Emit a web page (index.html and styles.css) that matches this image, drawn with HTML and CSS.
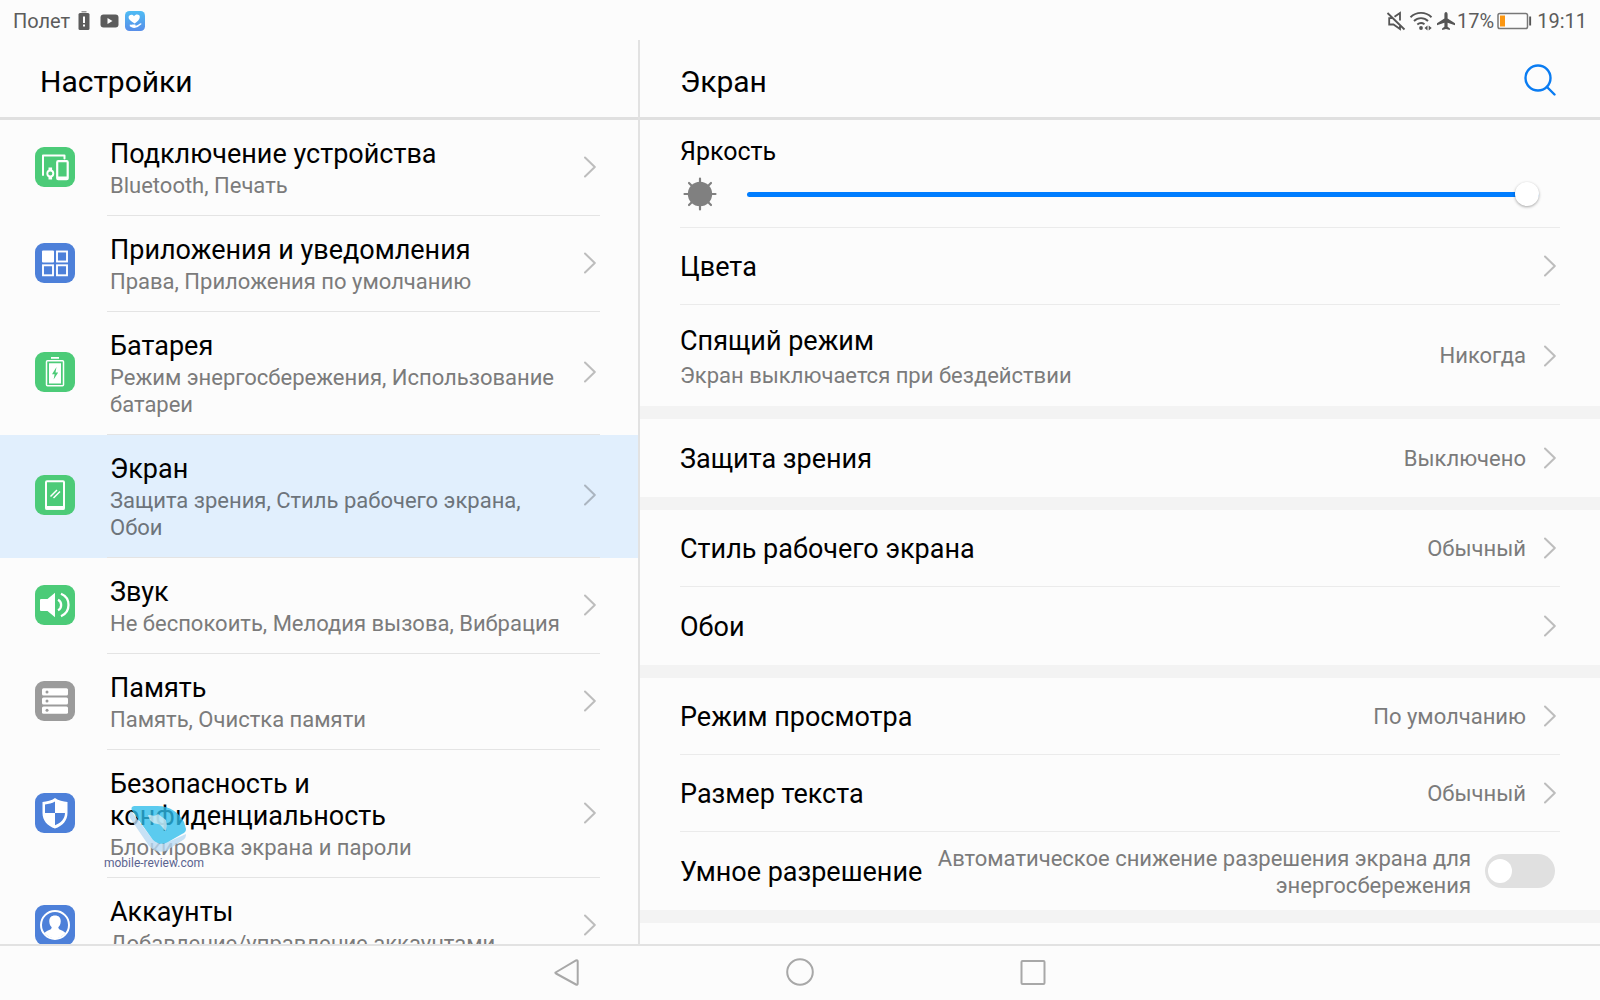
FILE: index.html
```html
<!DOCTYPE html>
<html lang="ru">
<head>
<meta charset="utf-8">
<meta name="viewport" content="width=device-width, initial-scale=1">
<title>Настройки</title>
<link rel="stylesheet" href="styles.css">
</head>
<body>
<svg class="defs" aria-hidden="true">
  <symbol id="chevron" viewBox="0 0 12 22"><path d="M1 1.500 10.800 11 1 20.500" fill="none" stroke="currentColor" stroke-width="2" stroke-linecap="round" stroke-linejoin="round"/></symbol>
</svg>
<div class="screen">
  <div class="statusbar">
    <div class="status-left">
      <span>Полет</span>
      <svg class="st-alert" width="12" height="20" viewBox="0 0 12 20"><path d="M3.500 0h5v1.500h-5z" fill="#999"/><rect x="0.500" y="2" width="11" height="17" rx="1.500" fill="#5c5c5c"/><path d="M5 5.500h2v6.500H5zM5 13.500h2v2H5z" fill="#fff"/></svg>
      <svg class="st-video" width="19" height="14" viewBox="0 0 19 14"><rect x="0.500" y="0.500" width="18" height="13" rx="3" fill="#5c5c5c"/><path d="M7.500 4v6l5-3z" fill="#fff"/></svg>
      <svg width="20" height="20" viewBox="0 0 20 20"><defs><linearGradient id="care" x1="0" y1="0" x2="0" y2="1"><stop offset="0" stop-color="#4fbcf4"/><stop offset="1" stop-color="#588ee9"/></linearGradient></defs><rect width="20" height="20" rx="4.500" fill="url(#care)"/><path d="M9.700 12.500C6.500 10.500 3.600 8.600 3.600 6.200c0-2.500 3.700-3.600 5.400-1 1.600-2.400 5.800-2 5.800.7 0 2.300-2.400 4.600-5.100 6.600z" fill="#fff"/><path d="M4.800 13.500c2 .5 3.500-.2 5 .1 1.400.2 1 1.200 0 1.400 2.500-.2 4.500-2.600 6-2.800.9 0 .9.800.2 1.400-2.200 2-4.300 3.300-6.700 3.300-2 0-3.400-1.400-4.500-1.700z" fill="#fff"/></svg>
    </div>
    <div class="status-right">
      <svg width="20" height="20" viewBox="0 0 20 20" fill="none" stroke="#555" stroke-width="1.800"><path d="M1.500 2 18.500 18.500M8.500 5.800 14 2v7.500M6 7.200H3.200v6.300h4.300L14 18v-3"/></svg>
      <svg width="24" height="20" viewBox="0 0 24 20" fill="none" stroke="#555" stroke-width="1.900"><path d="M1.500 6.200a15 15 0 0 1 21 0M5 10a10 10 0 0 1 14 0M8.300 13.500a6 6 0 0 1 7.200-.3"/><circle cx="12" cy="17" r="1.900" fill="#555" stroke="none"/><path d="M15.500 17l3-2.500v5zM22.700 17l-3-2.500v5z" fill="#555" stroke="none"/></svg>
      <svg width="20" height="20" viewBox="0 0 20 20"><path d="M10 1c1 0 1.600 1 1.600 2.300v4.200l7.400 4.700v2l-7.400-2.400v4l2.300 1.700V19L10 18l-3.900 1v-1.500l2.300-1.700v-4L1 14.200v-2l7.400-4.700V3.300C8.400 2 9 1 10 1z" fill="#555"/></svg>
      <span>17%</span>
      <svg class="st-battery" width="35" height="18" viewBox="0 0 35 18"><rect x="1" y="1.500" width="29.500" height="15" rx="1.800" fill="none" stroke="#777" stroke-width="1.500"/><path d="M3 3.500h5v11H3z" fill="#fb9611"/><path d="M32.200 4.500h1.900v9h-1.900z" fill="#555"/></svg>
      <span>19:11</span>
    </div>
  </div>

  <main class="panes">
    <section class="pane pane-menu">
      <header class="pane-header"><h1>Настройки</h1></header>
      <nav class="menu">
        <a class="item" href="#devices">
          <svg class="app green" width="40" height="40" viewBox="0 0 40 40"><path d="M8 28V8.500h21.500v3" fill="none" stroke="#fff" stroke-width="2" stroke-linejoin="round" stroke-linecap="round"/><rect x="22.200" y="14.200" width="10.500" height="18" rx="1" fill="none" stroke="#fff" stroke-width="2.200"/><path d="M22 29.500h11v3H22zM13.500 20.500h3.600v3h-3.600zM13.500 29.500h3.600v3h-3.600z" fill="#fff"/><circle cx="15.300" cy="26.500" r="3" fill="none" stroke="#fff" stroke-width="1.900"/></svg>
          <span class="item-main"><span class="item-text"><span class="title">Подключение устройства</span><span class="sub">Bluetooth, Печать</span></span><svg class="chev"><use href="#chevron"/></svg></span>
        </a>
        <a class="item" href="#apps">
          <svg class="app blue" width="40" height="40" viewBox="0 0 40 40"><rect x="7" y="7.500" width="12" height="12" rx="1" fill="#fff"/><g fill="none" stroke="#fff" stroke-width="1.900"><rect x="22" y="8.500" width="10" height="10"/><rect x="8" y="22.300" width="10" height="10"/><rect x="22" y="22.300" width="10" height="10"/></g></svg>
          <span class="item-main"><span class="item-text"><span class="title">Приложения и уведомления</span><span class="sub">Права, Приложения по умолчанию</span></span><svg class="chev"><use href="#chevron"/></svg></span>
        </a>
        <a class="item" href="#battery">
          <svg class="app green" width="40" height="40" viewBox="0 0 40 40"><path d="M16 5h8v1.800h-8z" fill="#fff"/><rect x="11.500" y="8.800" width="17" height="25" rx="1" fill="none" stroke="#fff" stroke-width="1.500"/><path d="M14 11.200h12v20.300H14z" fill="#fff"/><path d="M21.500 15 17 22.200h2.600l-1 5.300 4.600-7h-2.700z" fill="#4ccb78"/></svg>
          <span class="item-main"><span class="item-text"><span class="title">Батарея</span><span class="sub">Режим энергосбережения, Использование батареи</span></span><svg class="chev"><use href="#chevron"/></svg></span>
        </a>
        <a class="item selected" href="#display" aria-current="page">
          <svg class="app green" width="40" height="40" viewBox="0 0 40 40"><rect x="11" y="6.300" width="18" height="27.500" rx="1" fill="none" stroke="#fff" stroke-width="2"/><path d="M10.500 31h19v3.800h-19z" fill="#fff"/><path d="M15.500 21.500l6.500-6.500M18.500 23l6.500-6.500" stroke="#fff" stroke-width="1.500"/></svg>
          <span class="item-main"><span class="item-text"><span class="title">Экран</span><span class="sub">Защита зрения, Стиль рабочего экрана, Обои</span></span><svg class="chev"><use href="#chevron"/></svg></span>
        </a>
        <a class="item" href="#sound">
          <svg class="app green" width="40" height="40" viewBox="0 0 40 40"><path d="M6 14h6.500l7.500-6.300v24.500L12.500 26H6a1 1 0 0 1-1-1V15a1 1 0 0 1 1-1z" fill="#fff"/><path d="M23 14.800c4.200 2 4.200 8.400 0 10.400M26 8.800c10 4.200 10 18.200 0 22.400" fill="none" stroke="#fff" stroke-width="2.300"/></svg>
          <span class="item-main"><span class="item-text"><span class="title">Звук</span><span class="sub">Не беспокоить, Мелодия вызова, Вибрация</span></span><svg class="chev"><use href="#chevron"/></svg></span>
        </a>
        <a class="item" href="#storage">
          <svg class="app gray" width="40" height="40" viewBox="0 0 40 40"><g fill="#fff"><rect x="7" y="7.300" width="26" height="7.300" rx="1.500"/><rect x="7" y="16.500" width="26" height="7" rx="1.500"/><rect x="7" y="25.500" width="26" height="7.300" rx="1.500"/></g><g fill="#9b9b9b"><circle cx="12" cy="11" r="1.500"/><circle cx="12" cy="20" r="1.500"/><circle cx="12" cy="29.200" r="1.500"/></g></svg>
          <span class="item-main"><span class="item-text"><span class="title">Память</span><span class="sub">Память, Очистка памяти</span></span><svg class="chev"><use href="#chevron"/></svg></span>
        </a>
        <a class="item" href="#security">
          <svg class="app blue" width="40" height="40" viewBox="0 0 40 40"><path d="M20 5c3.500 2.800 8 3.500 12.500 4v11c0 7.500-5 13-12.500 15.500C12.500 33 7.500 27.500 7.500 20V9C12 8.500 16.500 7.800 20 5z" fill="#fff"/><path d="M20 8.500V20H10v-8.500c3.600-.4 7-1.200 10-3zM20 20h10c0 5.800-4.200 10-10 12.200z" fill="#4d80d9"/></svg>
          <span class="item-main"><span class="item-text"><span class="title">Безопасность и конфиденциальность</span><span class="sub">Блокировка экрана и пароли</span></span><svg class="chev"><use href="#chevron"/></svg></span>
          <span class="watermark">
            <svg width="62" height="48" viewBox="0 0 62 48"><path d="M3 5C1 8 1 10 2 12L19 37c5 8 12 10 19 8l17-11c2-1 3-3 3-6L40 36c-6 3-12 1-15-2z" fill="#b9daf3" opacity=".8"/><path d="M7 0h22c14 0 22 7 27 16l2 7c0 3-2 4-4 5L40 36c-5 3-11 2-15-2L5 6C2 2 4 0 7 0z" fill="#2dbdeb" opacity=".78"/><path d="M20 9c4 0 7 2 10-1l8 6c1 4 1 6 0 11-3-2-4-6-8-7-4 0-8-3-9-6z" fill="#e3f1f7" opacity=".7"/></svg>
            <span class="watermark-text">mobile-review.com</span>
          </span>
        </a>
        <a class="item" href="#accounts">
          <svg class="app blue" width="40" height="40" viewBox="0 0 40 40"><circle cx="20" cy="20" r="14" fill="none" stroke="#fff" stroke-width="2"/><path d="M20 10.500c4 0 6 2.500 5.700 6.300-.2 3-1.200 4.200-2.400 5.400 0 3.300 5.700 3 7.200 5.800a13 13 0 0 1-21 0c1.500-2.800 7.200-2.500 7.200-5.800-1.200-1.200-2.200-2.400-2.400-5.400-.3-3.800 1.700-6.300 5.700-6.300z" fill="#fff"/></svg>
          <span class="item-main"><span class="item-text"><span class="title">Аккаунты</span><span class="sub">Добавление/управление аккаунтами</span></span><svg class="chev"><use href="#chevron"/></svg></span>
        </a>
      </nav>
    </section>

    <section class="pane pane-detail">
      <header class="pane-header">
        <h2>Экран</h2>
        <button class="search" type="button" aria-label="Поиск"><svg width="32" height="32" viewBox="0 0 32 32" fill="none" stroke="#0a7cf2" stroke-width="2.400" stroke-linecap="round"><circle cx="14" cy="14" r="12.500"/><path d="M23 23l7.500 7.500"/></svg></button>
      </header>
      <div class="groups">
        <div class="group">
          <div class="row brightness">
            <label class="title" for="brightness">Яркость</label>
            <div class="slider-line">
              <svg width="34" height="34" viewBox="0 0 34 34"><circle cx="17" cy="17" r="12.200" fill="#808080"/><path d="M17 1.500v5M17 27.500v5M1.500 17h5M27.500 17h5M6 6l3 3M25 25l3 3M6 28l3-3M25 9l3-3" stroke="#808080" stroke-width="2.200" stroke-linecap="round"/></svg>
              <input id="brightness" type="range" min="0" max="100" value="100">
            </div>
          </div>
          <a class="row" href="#colors"><span class="title">Цвета</span><svg class="chev"><use href="#chevron"/></svg></a>
          <a class="row tall" href="#sleep"><span class="row-text"><span class="title">Спящий режим</span><span class="sub">Экран выключается при бездействии</span></span><span class="value">Никогда</span><svg class="chev"><use href="#chevron"/></svg></a>
        </div>
        <div class="group">
          <a class="row" href="#eye"><span class="title">Защита зрения</span><span class="value">Выключено</span><svg class="chev"><use href="#chevron"/></svg></a>
        </div>
        <div class="group">
          <a class="row" href="#home-style"><span class="title">Стиль рабочего экрана</span><span class="value">Обычный</span><svg class="chev"><use href="#chevron"/></svg></a>
          <a class="row" href="#wallpaper"><span class="title">Обои</span><svg class="chev"><use href="#chevron"/></svg></a>
        </div>
        <div class="group">
          <a class="row" href="#view-mode"><span class="title">Режим просмотра</span><span class="value">По умолчанию</span><svg class="chev"><use href="#chevron"/></svg></a>
          <a class="row" href="#text-size"><span class="title">Размер текста</span><span class="value">Обычный</span><svg class="chev"><use href="#chevron"/></svg></a>
          <div class="row smart"><label class="title" for="smart">Умное разрешение</label><span class="value note">Автоматическое снижение разрешения экрана для энергосбережения</span><input class="switch" id="smart" type="checkbox" role="switch"></div>
        </div>
      </div>
    </section>
  </main>

  <footer class="navbar">
    <button type="button" aria-label="Назад"><svg width="28" height="30" viewBox="0 0 28 30"><path d="M2.500 14.500 23 2.500c1-.5 1.700 0 1.700 1v22c0 1-.7 1.500-1.700 1L3 15.500c-.8-.4-.8-.7-.5-1z"/></svg></button>
    <button type="button" aria-label="Домой"><svg width="28" height="30" viewBox="0 0 28 30"><circle cx="14" cy="14" r="12.800"/></svg></button>
    <button type="button" aria-label="Недавние"><svg width="28" height="30" viewBox="0 0 28 30"><rect x="2.500" y="3" width="23" height="23" rx="1"/></svg></button>
  </footer>
</div>
</body>
</html>
```
FILE: styles.css
```css
* { box-sizing: border-box; }

body {
  margin: 0;
  background: #fcfcfc;
  color: #000;
  font-family: Roboto, "Noto Sans", sans-serif;
}

a { color: inherit; text-decoration: none; }
button { padding: 0; border: 0; background: none; }
svg { display: block; flex: none; }
.defs { position: absolute; width: 0; height: 0; }

.screen {
  display: flex;
  flex-direction: column;
  height: 100vh;
}

/* Status bar */
.statusbar {
  display: flex;
  justify-content: space-between;
  align-items: center;
  height: 40px;
  padding: 2px 13px 0 13px;
  color: #5c5c5c;
  font-size: 20px;
  line-height: 24px;
}
.status-left, .status-right { display: flex; align-items: center; }
.status-left { gap: 8px; }
.st-video { margin: 0 -2px 0 2px; }
.status-right { gap: 3px; }
.status-right span { margin-left: -2px; }
.status-right .st-battery + span { margin-left: 2px; }

/* Panes */
.panes {
  display: grid;
  grid-template-columns: 2fr 3fr;
  flex: 1;
  min-height: 0;
}
.pane {
  display: flex;
  flex-direction: column;
  min-width: 0;
  min-height: 0;
}
.pane-menu { border-right: 2px solid #e2e2e2; }
.pane-header {
  display: flex;
  justify-content: space-between;
  align-items: center;
  flex: none;
  height: 80px;
  padding: 2px 44px 0 40px;
  border-bottom: 3px solid #e0e0e0;
}
h1, h2 {
  margin: 0;
  padding-top: 4px;
  font-size: 30px;
  line-height: 36px;
  font-weight: 400;
}
.menu, .groups {
  flex: 1;
  min-height: 0;
  overflow-y: auto;
  scrollbar-width: none;
}

.title { font-size: 27px; line-height: 32px; }
.sub, .value { color: #7b7b7b; font-size: 22px; line-height: 27px; }
.chev { width: 12px; height: 22px; color: #bdbdbd; }

/* Settings menu */
.item {
  position: relative;
  display: flex;
  align-items: center;
  gap: 32px;
  padding: 0 38px 0 35px;
}
.app { margin-bottom: 3px; border-radius: 9px; }
.green { background: #4ccb78; }
.blue { background: #4d80d9; }
.gray { background: #9b9b9b; }
.item-main {
  display: flex;
  flex: 1;
  align-items: center;
  justify-content: space-between;
  gap: 20px;
  padding: 16px 4px 16px 3px;
  border-bottom: 1px solid #e4e4e4;
}
.item-text, .row-text { display: flex; flex-direction: column; }
.item-text { gap: 2px; padding-top: 2px; }
.item .chev { margin-bottom: 2px; }
.selected { background: #e1effd; }
.selected .sub { color: #6d747b; }
.selected .chev { color: #abb5c0; }

.watermark {
  position: absolute;
  left: 104px;
  top: 56px;
  display: flex;
  flex-direction: column;
  color: #5a6390;
}
.watermark svg { margin-left: 24px; }
.watermark-text {
  font-size: 12px;
  line-height: 18px;
}

/* Display settings */
.group { padding: 0 40px; }
.group + .group { border-top: 13px solid #f3f3f3; }
.group:last-child { border-bottom: 13px solid #f3f3f3; }
.row {
  display: flex;
  align-items: center;
  gap: 18px;
  min-height: 77px;
  padding-right: 4px;
  border-bottom: 1px solid #ebebeb;
}
.row:last-child { min-height: 78px; border-bottom: 0; }
.row .title { margin-right: auto; }
.row > .title { padding-top: 2px; white-space: nowrap; }
.row.tall { min-height: 101px; }
.row-text { gap: 5px; margin-right: auto; padding-top: 3px; }
.row.smart { gap: 14px; padding-right: 5px; }
.row .note {
  max-width: 540px;
  padding-top: 2px;
  text-align: right;
}
.row.brightness {
  flex-direction: column;
  align-items: stretch;
  gap: 9px;
  padding: 14px 21px 16px 0;
}
.brightness .title { font-size: 25px; }
.slider-line {
  display: flex;
  align-items: center;
  gap: 30px;
  padding-left: 3px;
}
.slider-line input {
  flex: 1;
  min-width: 0;
  height: 24px;
  margin: 0;
  appearance: none;
  background: none;
}
.slider-line input::-webkit-slider-runnable-track {
  height: 5px;
  border-radius: 3px;
  background: #007dff;
}
.slider-line input::-webkit-slider-thumb {
  appearance: none;
  width: 24px;
  height: 24px;
  margin-top: -10px;
  border-radius: 50%;
  background: #fff;
  box-shadow: 0 1px 3px rgba(0, 0, 0, 0.35);
}

.switch {
  appearance: none;
  display: flex;
  align-items: center;
  flex: none;
  width: 70px;
  height: 34px;
  margin: 0;
  padding: 0 3px;
  border-radius: 17px;
  background: #e0e0e0;
}
.switch::before {
  content: "";
  width: 24px;
  height: 24px;
  border-radius: 50%;
  background: #fff;
}
.switch:checked { justify-content: flex-end; background: #007dff; }

/* Navigation bar */
.navbar {
  display: flex;
  justify-content: center;
  align-items: center;
  gap: 185px;
  flex: none;
  height: 56px;
  border-top: 2px solid #e2e2e2;
}
.navbar button {
  display: flex;
  align-items: center;
  justify-content: center;
  width: 48px;
  height: 48px;
}
.navbar svg { fill: none; stroke: #a8a8a8; stroke-width: 2; }
```
